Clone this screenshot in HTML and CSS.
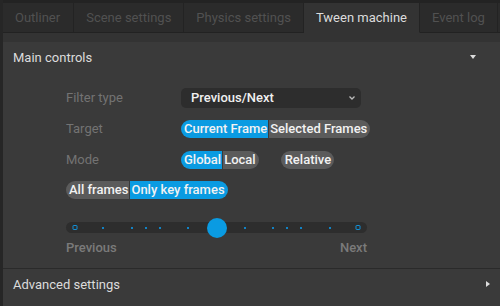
FILE: index.html
```html
<!DOCTYPE html>
<html>
<head>
	<meta charset="utf-8"/>
	<title>Tween machine</title>
	<link rel="stylesheet" href="styles.css">
</head>
<body>
	<div class="app">
		<div class="tabs">
			<div class="tab">Outliner</div>
			<div class="tab">Scene settings</div>
			<div class="tab">Physics settings</div>
			<div class="tab active">Tween machine</div>
			<div class="tab">Event log</div>
			<div class="tab-rest"></div>
		</div>
		<div class="tab-band"></div>
		<div class="section-head">
			<span>Main controls</span>
			<span class="tri-down"></span>
		</div>
		<div class="controls">
			<div class="row">
				<label>Filter type</label>
				<div class="select">Previous/Next
					<svg width="8" height="6" viewBox="0 0 8 6"><path d="M1.5 1.5 L4 4 L6.5 1.5" fill="none" stroke="#bbb" stroke-width="1.3"/></svg>
				</div>
			</div>
			<div class="row">
				<label>Target</label>
				<div class="group">
					<span class="btn on">Current Frame</span><span class="btn">Selected Frames</span>
				</div>
			</div>
			<div class="row">
				<label>Mode</label>
				<div class="group">
					<span class="btn on">Global</span><span class="btn">Local</span>
				</div>
				<div class="group single">
					<span class="btn">Relative</span>
				</div>
			</div>
			<div class="row wide">
				<div class="group">
					<span class="btn">All frames</span><span class="btn on">Only key frames</span>
				</div>
			</div>
			<div class="slider">
				<div class="track">
					<div class="marks">
						<span class="dot ring" style="left: 0%"></span>
						<span class="dot" style="left: 10%"></span>
						<span class="dot" style="left: 20%"></span>
						<span class="dot" style="left: 25%"></span>
						<span class="dot" style="left: 30%"></span>
						<span class="dot" style="left: 40%"></span>
						<span class="dot" style="left: 60%"></span>
						<span class="dot" style="left: 70%"></span>
						<span class="dot" style="left: 75%"></span>
						<span class="dot" style="left: 80%"></span>
						<span class="dot" style="left: 90%"></span>
						<span class="dot ring" style="left: 100%"></span>
						<span class="thumb" style="left: 50%"></span>
					</div>
				</div>
				<div class="ends"><span>Previous</span><span>Next</span></div>
			</div>
		</div>
		<div class="section-head adv">
			<span>Advanced settings</span>
			<span class="tri-right"></span>
		</div>
	</div>
</body>
</html>
```

FILE: styles.css
```css
html, body {height: 100%;}
body {margin: 0; background-color: #3a3a3a; font-family: Roboto, "Liberation Sans", sans-serif; font-size: 13px; overflow: hidden;}

.app {height: 306px; border-left: 3px solid #262626; display: flex; flex-direction: column;}

.tabs {display: flex; background-color: #232323; padding-top: 3px; flex-shrink: 0;}
.tab {height: 29px; line-height: 29px; padding: 0 12px; white-space: nowrap; flex-shrink: 0; background-color: #2b2b2b; color: #515151; border-right: 1px solid #232323; border-bottom: 1px solid #222;}
.tab:first-child {padding-right: 13px;}
.tab.active {background-color: #333; color: #dcdcdc; border-bottom-color: #333;}
.tab-rest {flex: 1; min-width: 0; background-color: #2b2b2b; border-bottom: 1px solid #222;}
.tab-band {height: 9px; flex-shrink: 0; background-color: #333;}

.section-head {height: 30px; flex-shrink: 0; display: flex; align-items: center; justify-content: space-between; padding: 0 13px 0 10px; color: #dcdcdc;}
.tri-down {width: 0; height: 0; border-left: 3px solid transparent; border-right: 3px solid transparent; border-top: 4px solid #ddd; margin-right: 11px;}
.tri-right {width: 0; height: 0; border-top: 3px solid transparent; border-bottom: 3px solid transparent; border-left: 4px solid #ddd; margin-right: -3px;}
.adv {border-top: 1px solid #2a2a2a; height: 30px;}

.controls {padding: 10px 0 0 63px; height: 196px; flex-shrink: 0; box-sizing: border-box;}
.row {display: flex; align-items: center; height: 31px;}
.row label {width: 115px; color: #737373;}
.row.wide {height: 30px;}

.select {width: 165px; height: 20px; background-color: #2d2d2d; border-radius: 5px; padding: 0 5px 0 10px; display: flex; align-items: center; justify-content: space-between; color: #f0f0f0; font-weight: 500;}

.group {display: flex; height: 18px; border-radius: 9px; overflow: hidden;}
.group.single {margin-left: 22px;}
.btn {background-color: #5b5b5b; color: #f2f2f2; line-height: 18px; padding: 0 1px; font-weight: 500; border-left: 1px solid #3a3a3a;}
.btn:first-child {border-left: none; padding-left: 3px;}
.btn:last-child {padding-right: 3px;}
.single .btn {padding: 0 3px 0 4px;}
.btn.on {background-color: #0a9be2;}

.slider {width: 301px; margin-top: 17px;}
.track {position: relative; height: 11px; background-color: #2d2d2d; border-radius: 6px;}
.marks {position: absolute; left: 9px; right: 9px; top: 0; bottom: 0;}
.dot {position: absolute; top: 5px; width: 2px; height: 2px; transform: translateX(-50%); background-color: #1282c4;}
.dot.ring {top: 3px; width: 3px; height: 3px; border: 1px solid #1290d6; background-color: transparent; border-radius: 1px;}
.thumb {position: absolute; top: -4px; width: 20px; height: 20px; transform: translateX(-50%); border-radius: 50%; background-color: #0a9be2;}
.ends {display: flex; justify-content: space-between; color: #7a7a7a; margin-top: 7px; font-weight: 500;}
```
